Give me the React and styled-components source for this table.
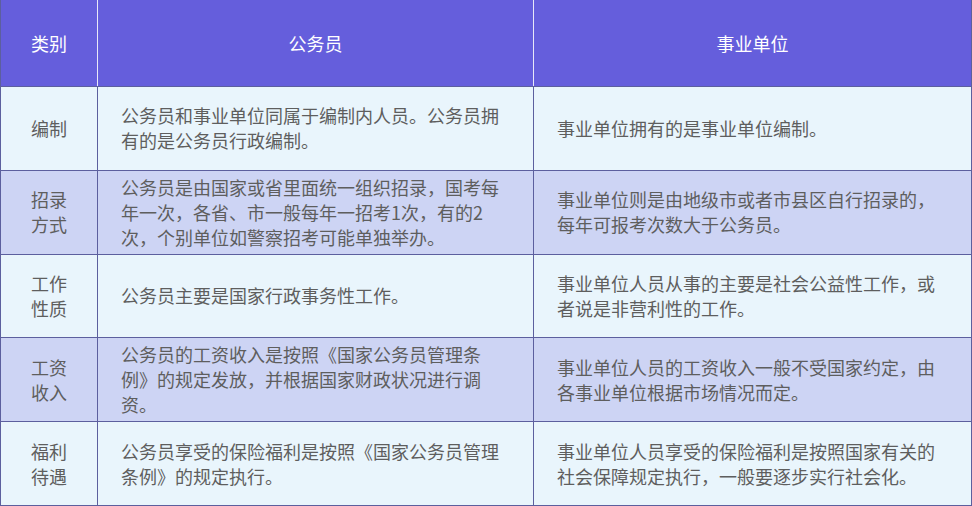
import React from "react";
import styled, { createGlobalStyle } from "styled-components";

const GlobalStyle = createGlobalStyle`
    html, body {
        margin: 0;
        padding: 0;
        background: #ffffff;
    }
    body {
        font-family: "Noto Sans CJK SC", "Noto Sans", sans-serif;
    }
`;

const rows = [
    {
        cat: ["编制"],
        gwy: ["公务员和事业单位同属于编制内人员。公务员拥", "有的是公务员行政编制。"],
        sy: ["事业单位拥有的是事业单位编制。"],
    },
    {
        cat: ["招录", "方式"],
        gwy: [
            "公务员是由国家或省里面统一组织招录，国考每",
            "年一次，各省、市一般每年一招考1次，有的2",
            "次，个别单位如警察招考可能单独举办。",
        ],
        sy: ["事业单位则是由地级市或者市县区自行招录的，", "每年可报考次数大于公务员。"],
    },
    {
        cat: ["工作", "性质"],
        gwy: ["公务员主要是国家行政事务性工作。"],
        sy: ["事业单位人员从事的主要是社会公益性工作，或", "者说是非营利性的工作。"],
    },
    {
        cat: ["工资", "收入"],
        gwy: [
            "公务员的工资收入是按照《国家公务员管理条",
            "例》的规定发放，并根据国家财政状况进行调",
            "资。",
        ],
        sy: ["事业单位人员的工资收入一般不受国家约定，由", "各事业单位根据市场情况而定。"],
    },
    {
        cat: ["福利", "待遇"],
        gwy: ["公务员享受的保险福利是按照《国家公务员管理", "条例》的规定执行。"],
        sy: ["事业单位人员享受的保险福利是按照国家有关的", "社会保障规定执行，一般要逐步实行社会化。"],
    },
];

const lines = (arr) =>
    arr.map((t, i) => (
        <React.Fragment key={i}>
            {i > 0 && <br />}
            {t}
        </React.Fragment>
    ));

const App = () => {
    return (
        <>
            <GlobalStyle />
            <Table>
                <Header>
                    <HeadCell>类别</HeadCell>
                    <HeadCell>公务员</HeadCell>
                    <HeadCell $last>事业单位</HeadCell>
                </Header>
                {rows.map((r, i) => (
                    <Row key={i} $alt={i % 2 === 1}>
                        <CatCell>{lines(r.cat)}</CatCell>
                        <TextCell>{lines(r.gwy)}</TextCell>
                        <TextCell $last>{lines(r.sy)}</TextCell>
                    </Row>
                ))}
            </Table>
        </>
    );
};

const Table = styled.div`
    width: 972px;
    height: 506px;
    box-sizing: border-box;
    border: 1px solid #5c5f9e;
    border-top: none;
    display: flex;
    flex-direction: column;
    overflow: hidden;
`;

const Header = styled.div`
    display: grid;
    grid-template-columns: 97px 436px 1fr;
    height: 86px;
    background-color: #655edc;
    border-bottom: 1px solid #5c5f9e;
    flex-shrink: 0;
`;

const HeadCell = styled.div`
    display: flex;
    align-items: center;
    justify-content: center;
    color: #ffffff;
    font-size: 18px;
    border-right: ${(p) => (p.$last ? "none" : "1px solid #e8e8f8")};
`;

const Row = styled.div`
    display: grid;
    grid-template-columns: 97px 436px 1fr;
    flex: 1;
    background-color: ${(p) => (p.$alt ? "#cdd4f4" : "#e9f5fc")};
    border-bottom: 1px solid #5c5f9e;
    &:last-child {
        border-bottom: none;
    }
`;

const Cell = styled.div`
    display: flex;
    align-items: center;
    color: #5e5e5e;
    font-size: 18px;
    line-height: 25px;
    border-right: ${(p) => (p.$last ? "none" : "1px solid #5c5f9e")};
`;

const CatCell = styled(Cell)`
    justify-content: center;
    text-align: center;
`;

const TextCell = styled(Cell)`
    padding: 0 10px 0 23px;
    white-space: nowrap;
`;

export default App;
